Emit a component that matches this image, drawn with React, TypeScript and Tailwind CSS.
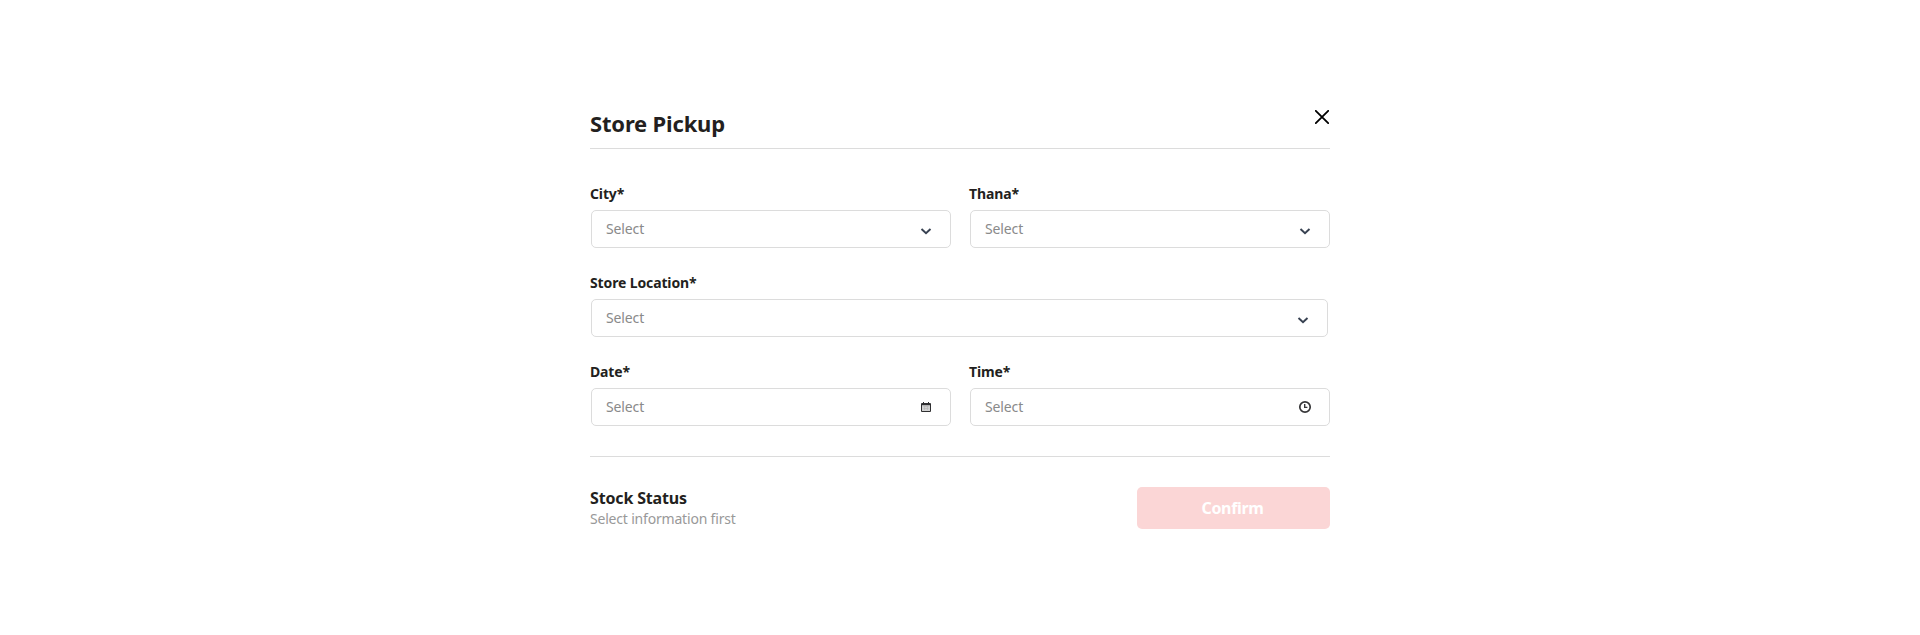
import React from "react";

type FieldProps = { label: string; icon: React.ReactNode; className?: string };

const Chevron = () => (
  <svg width="10" height="7" viewBox="0 0 10 7" fill="none" className="relative top-[2px] overflow-visible">
    <path d="M0.500 1L5 5.300L9.500 1" stroke="#374151" strokeWidth="1.900" />
  </svg>
);

const Calendar = () => (
  <svg width="10" height="10" viewBox="0 0 10 10">
    <path d="M1 .9h1V0h1v.9h4V0h1v.9h1a1 1 0 0 1 1 1V9a1 1 0 0 1-1 1H1a1 1 0 0 1-1-1V1.900a1 1 0 0 1 1-1Z" fill="#2f2f31" />
    <path d="M1 3.200h8v5.800H1Z" fill="#d2d2d2" />
    <path d="M2.500 4.500h5M2.500 6.500h5M3.500 4v4M6.500 4v4" stroke="#b4b4b4" strokeWidth=".6" />
  </svg>
);

const Clock = () => (
  <svg width="12" height="12" viewBox="0 0 12 12" fill="none" stroke="#363638" className="-mr-px overflow-visible">
    <circle cx="6" cy="6" r="5.200" strokeWidth="1.700" />
    <path d="M5.700 3v3.400H8.400" strokeWidth="1.400" />
  </svg>
);

function Field({ label, icon, className = "" }: FieldProps) {
  return (
    <div className={className}>
      <div className="h-[27px] pt-px text-sm leading-5 font-bold tracking-[-0.13px]">{label}</div>
      <button className="ml-px flex h-[38px] w-[calc(100%-1px)] items-center justify-between rounded-[5px] border border-[#dcdcdc] pr-[19px] pl-3.5 text-sm tracking-[-0.12px] text-[#8a8a8a]">
        <span>Select</span>
        {icon}
      </button>
    </div>
  );
}

export default function App() {
  return (
    <main className="flex h-[635px] justify-center bg-white pt-[103px] font-['Noto_Sans',sans-serif] text-[#231f20]">
      <section className="w-[740px]">
        <header className="flex h-[46px] justify-between border-b border-[#dcdcdc]">
          <h1 className="mt-[3px] text-[22px] leading-[34px] font-bold tracking-[-0.18px]">Store Pickup</h1>
          <button aria-label="Close" className="mt-[7px] mr-px h-3.5 w-3.5">
            <svg width="14" height="14" viewBox="0 0 14 14" fill="none" stroke="#000" strokeWidth="1.800" strokeLinecap="round">
              <path d="M.8.8l12.400 12.400M13.200.8L.8 13.200" />
            </svg>
          </button>
        </header>
        <div className="mt-[34px] grid grid-cols-[361px_361px] gap-x-[18px] gap-y-6">
          <Field label="City*" icon={<Chevron />} />
          <Field label="Thana*" icon={<Chevron />} />
          <Field label="Store Location*" icon={<Chevron />} className="col-span-2 mr-0.5" />
          <Field label="Date*" icon={<Calendar />} />
          <Field label="Time*" icon={<Clock />} />
        </div>
        <footer className="mt-[30px] flex justify-between border-t border-[#dcdcdc] pt-[30px]">
          <div>
            <h2 className="text-base leading-[22px] font-bold tracking-[-0.16px]">Stock Status</h2>
            <p className="text-sm leading-5 tracking-[-0.19px] text-[#999]">Select information first</p>
          </div>
          <button className="h-[42px] w-[193px] rounded-[5px] bg-[#fbd6d6] pr-0.5 pb-px text-base font-bold tracking-[-0.35px] text-white">Confirm</button>
        </footer>
      </section>
    </main>
  );
}
